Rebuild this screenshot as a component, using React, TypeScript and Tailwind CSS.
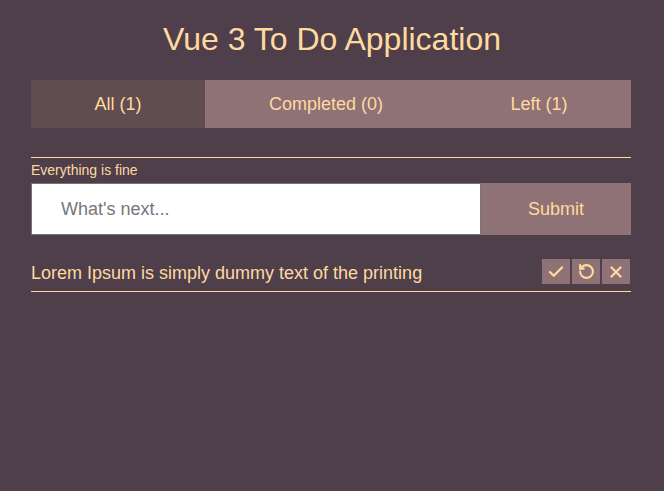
import { Check, RotateCcw, X } from "lucide-react";

const tabs = [
  { label: "All (1)", width: "w-[174px]", active: true },
  { label: "Completed (0)", width: "w-[242px]", active: false },
  { label: "Left (1)", width: "flex-1", active: false },
];

export default function App() {
  return (
    <div className="min-h-[491px] bg-[#4e3f4a] px-[31px] pt-[20px] font-['Liberation_Sans',Arial,sans-serif] text-[#ffd9a0]">
      <h1 className="text-center text-[32px] leading-[38px]">Vue 3 To Do Application</h1>

      <div className="mt-[22px] flex w-[600px]">
        {tabs.map((tab) => (
          <div
            key={tab.label}
            className={`${tab.width} flex h-[48px] items-center justify-center text-[18px] ${
              tab.active ? "bg-[#5f4d4f]" : "bg-[#8f7275]"
            }`}
          >
            {tab.label}
          </div>
        ))}
      </div>

      <div className="mt-[29px] w-[600px] border-t border-[#ffd9a0]" />
      <p className="mt-[4px] text-[14px] leading-[17px]">Everything is fine</p>

      <form className="mt-[4px] flex h-[52px] w-[600px]" onSubmit={(e) => e.preventDefault()}>
        <input
          placeholder="What's next..."
          className="h-full w-[450px] border border-[#767676] bg-white pl-[29px] text-[18px] text-gray-800 outline-none placeholder:text-[#75757c]"
        />
        <button className="flex-1 bg-[#8f7275] text-[18px] text-[#ffd9a0]">Submit</button>
      </form>

      <div className="mt-[24px] flex w-[600px] items-center justify-between border-b border-[#ffd9a0] pb-[7px]">
        <span className="translate-y-[1px] text-[18px] leading-[22px]">Lorem Ipsum is simply dummy text of the printing</span>
        <div className="mr-[1px] flex gap-[2px]">
          <button className="flex h-[25px] w-[28px] items-center justify-center bg-[#8f7275]">
            <Check size={18} strokeWidth={3} />
          </button>
          <button className="flex h-[25px] w-[28px] items-center justify-center bg-[#8f7275]">
            <RotateCcw size={17} strokeWidth={3} />
          </button>
          <button className="flex h-[25px] w-[28px] items-center justify-center bg-[#8f7275]">
            <X size={18} strokeWidth={3} />
          </button>
        </div>
      </div>
    </div>
  );
}
